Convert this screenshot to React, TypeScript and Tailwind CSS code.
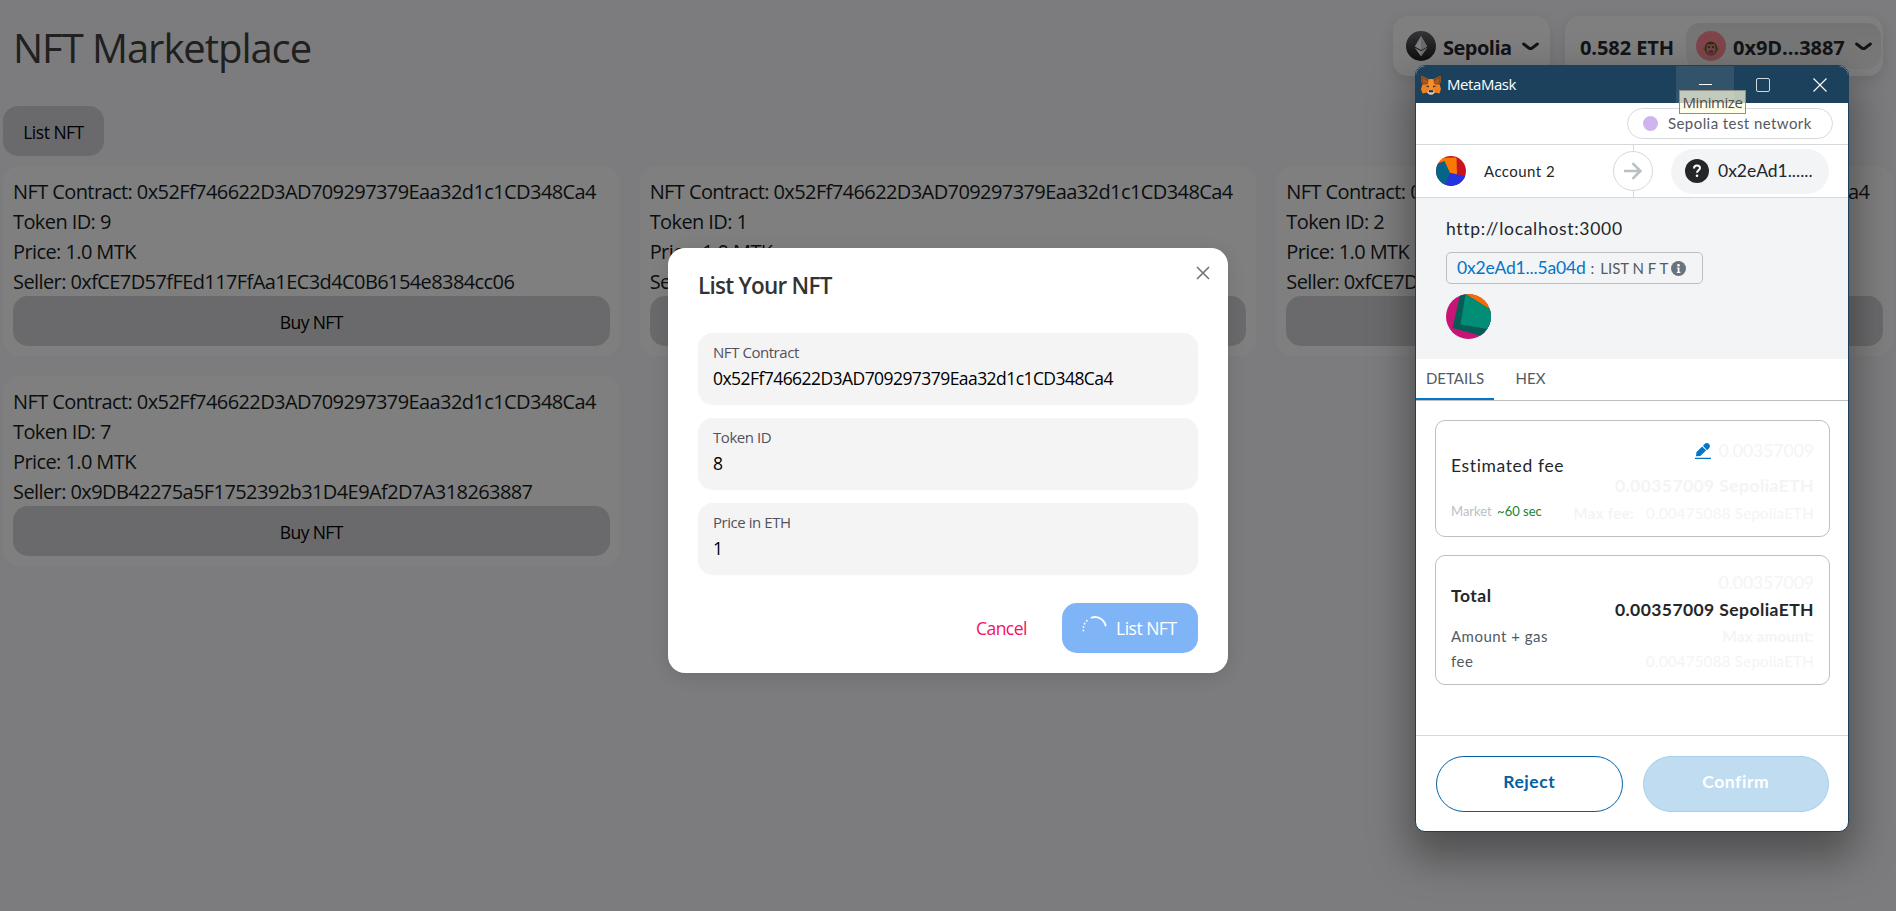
import type { ReactNode } from "react";

type Listing = { tokenId: number; seller: string };

const CONTRACT = "0x52Ff746622D3AD709297379Eaa32d1c1CD348Ca4";
const SELLER_A = "0xfCE7D57fFEd117FfAa1EC3d4C0B6154e8384cc06";
const SELLER_B = "0x9DB42275a5F1752392b31D4E9Af2D7A318263887";

const listings: Listing[] = [
  { tokenId: 9, seller: SELLER_A },
  { tokenId: 1, seller: SELLER_A },
  { tokenId: 2, seller: SELLER_A },
  { tokenId: 7, seller: SELLER_B },
];

function Chevron() {
  return (
    <svg viewBox="0 0 17 9" className="h-[9px] w-[17px] shrink-0" fill="none">
      <path d="M1.600 2 6.800 6Q8.500 7.200 10.200 6l5.200-4" stroke="#25292e" strokeWidth="2.900" strokeLinecap="round" />
    </svg>
  );
}

function EthIcon() {
  return (
    <svg viewBox="0 0 30 30" className="size-[30px] shrink-0">
      <defs>
        <linearGradient id="eth" x1="0" y1="0" x2="0" y2="1">
          <stop offset="0" stopColor="#6b6b70" />
          <stop offset="1" stopColor="#1c1c20" />
        </linearGradient>
      </defs>
      <circle cx="15" cy="15" r="15" fill="url(#eth)" />
      <path d="M15 5 8.800 15.400 15 19l6.200-3.600z" fill="#fff" />
      <path d="M15 5v14l6.200-3.600z" fill="#d6d6d9" />
      <path d="m8.800 16.700 6.200 8.500 6.200-8.500-6.200 3.600z" fill="#fff" />
      <path d="M15 20.300v4.900l6.200-8.500z" fill="#d6d6d9" />
    </svg>
  );
}

function MonkeyAvatar() {
  return (
    <svg viewBox="0 0 30 30" className="size-[30px] shrink-0">
      <circle cx="15" cy="15" r="15" fill="#ff8a94" />
      <circle cx="8.800" cy="18" r="1.900" fill="#c08a74" />
      <circle cx="21.200" cy="18" r="1.900" fill="#c08a74" />
      <ellipse cx="15" cy="17.500" rx="6.300" ry="7" fill="#7a4a34" />
      <path d="M15 13.800c1.500-1.600 4.300-.8 4.300 1.500 0 1 .4 1.900.4 3.300 0 3-2 5-4.700 5s-4.700-2-4.700-5c0-1.400.4-2.300.4-3.300 0-2.300 2.800-3.100 4.300-1.500z" fill="#c99479" />
      <circle cx="13" cy="16" r=".9" fill="#3a2018" />
      <circle cx="17" cy="16" r=".9" fill="#3a2018" />
      <ellipse cx="15" cy="20.800" rx="2.600" ry="1.600" fill="#b8307e" />
    </svg>
  );
}

function FoxIcon() {
  return (
    <svg viewBox="0 0 20 20" className="size-5 shrink-0">
      <path d="M.8.8 7.800 4.300h4.400L19.200.8 20 4.500l-1.300 5.300L20 14l-1.500 4.600-4.500-1.100-2.500 1.900h-3L6 17.500l-4.500 1.100L0 14l1.300-4.200L0 4.500z" fill="#f0811f" />
      <path d="m.8.8 7 3.500-1.500 5L1.300 9.800 0 4.500z" fill="#8a4a1c" />
      <path d="m19.200.8-7 3.500 1.500 5 5 .5L20 4.500z" fill="#8a4a1c" />
      <path d="M2 3.300 6.500 6l-.8 2.800L2 8.300z" fill="#a85a20" />
      <path d="M18 3.300 13.500 6l.8 2.800 3.700-.5z" fill="#a85a20" />
      <path d="M7.800 4.300h4.400l.3 9.700-2.500 1-2.500-1z" fill="#f7902c" />
      <path d="m4.500 11 3.300-.3.300 1.800zM15.500 11l-3.300-.3-.3 1.800z" fill="#33272a" />
      <path d="m6 17.500 1.800-2.500h4.400l1.800 2.500-2.500 1.900h-3z" fill="#d5cdc8" />
      <path d="M8 15.300h4l.4 2H7.600z" fill="#2a2226" />
    </svg>
  );
}

function Header() {
  return (
    <header className="flex h-[91px] items-start justify-between pl-[13px] pr-[13px] pt-4">
      <h1 className="pt-[2px] font-['Open_Sans',sans-serif] text-[40px] leading-[60px] tracking-[-1.05px] text-[#404040]">
        NFT Marketplace
      </h1>
      <div className="flex gap-[15px] font-bold text-[#25292e]">
        <div className="flex h-[60px] w-[157px] items-center gap-[7px] rounded-[15px] bg-white pl-[13px] text-[20px] shadow-[0_5px_15px_rgba(0,0,0,0.12)]">
          <EthIcon />
          <span className="pt-[4px] tracking-[-0.5px]">Sepolia</span>
          <span className="pl-[3px]">
            <Chevron />
          </span>
        </div>
        <div className="flex h-[60px] w-[318px] items-center justify-between rounded-[15px] bg-white pl-[15px] pr-[2px] text-[20px] shadow-[0_5px_15px_rgba(0,0,0,0.12)]">
          <span className="pt-[4px] tracking-[-0.08px]">0.582 ETH</span>
          <div className="flex h-[46px] w-[195px] items-center gap-[7px] rounded-[14px] bg-linear-to-b from-[#e8e8e8] to-[#f4f4f4] pl-[10px]">
            <MonkeyAvatar />
            <span className="pt-[4px] tracking-[-0.03px]">0x9D...3887</span>
            <span className="pl-[3px]">
              <Chevron />
            </span>
          </div>
        </div>
      </div>
    </header>
  );
}

function ListingCard({ tokenId, seller }: Listing) {
  return (
    <article className="flex h-[190px] flex-col justify-between rounded-[17px] bg-white p-[10px] pt-[11px] text-[20px] leading-[30px] tracking-[-0.59px] text-[#171c21]">
      <div className="h-[119px]">
        <p className="whitespace-nowrap">NFT Contract: {CONTRACT}</p>
        <p>Token ID: {tokenId}</p>
        <p>Price: 1.0 MTK</p>
        <p className="whitespace-nowrap">Seller: {seller}</p>
      </div>
      <button className="flex h-[50px] w-full items-center justify-center rounded-[15px] bg-[#d4d4d8] pt-[2px] text-[17.5px] text-black">
        Buy NFT
      </button>
    </article>
  );
}

function Field({ label, value }: { label: string; value: string }) {
  return (
    <label className="flex h-[71px] flex-col rounded-[15px] bg-[#f4f4f5] px-[15px] pt-[8px] shadow-[0_1px_2px_rgba(0,0,0,0.05)]">
      <span className="text-[15px] leading-[22px] tracking-[-0.45px] text-[#52525b]">{label}</span>
      <span className="pt-[2px] text-[17.5px] leading-[26px] tracking-[-0.56px] text-black">{value}</span>
    </label>
  );
}

function ListModal() {
  return (
    <section className="relative flex h-[425px] w-[560px] flex-col rounded-[17px] bg-white px-[30px] pt-[21px] shadow-[0_4px_18px_rgba(0,0,0,0.12)]">
      <button className="absolute right-[18px] top-[18px]" aria-label="Close">
        <svg viewBox="0 0 14 14" className="size-[14px]" fill="none" stroke="#71717a" strokeWidth="1.600">
          <path d="m1 1 12 12M13 1 1 13" />
        </svg>
      </button>
      <h2 className="text-[22.5px] font-semibold leading-[34px] tracking-[-0.75px] text-[#333]">List Your NFT</h2>
      <div className="flex flex-col gap-[14px] pt-[30px]">
        <Field label="NFT Contract" value={CONTRACT} />
        <Field label="Token ID" value="8" />
        <Field label="Price in ETH" value="1" />
      </div>
      <div className="flex items-center justify-end gap-[35px] pt-[29px] text-[17.5px] tracking-[-0.5px]">
        <button className="pt-[1px] text-[#f31260]">Cancel</button>
        <button className="flex h-[50px] w-[136px] items-center rounded-[15px] bg-[#7fb5f6] pl-[20px] text-white">
          <svg viewBox="0 0 25 25" className="size-[25px]" fill="none" stroke="#fff" strokeLinecap="round">
            <path d="M9.600 1.600A11 11 0 0 1 23.600 9.500" strokeWidth="1.900" />
            <path d="M1.400 14.500A11 11 0 0 1 7.500 3" strokeWidth="1.900" strokeDasharray="0.100 3.400" opacity=".85" />
          </svg>
          <span className="pl-[9px] pt-[1px]">List NFT</span>
        </button>
      </div>
    </section>
  );
}

function AccountIcon() {
  return (
    <svg viewBox="0 0 30 30" className="size-[30px] shrink-0">
      <clipPath id="acc">
        <circle cx="15" cy="15" r="15" />
      </clipPath>
      <g clipPath="url(#acc)">
        <path d="M0 0h30v30H0z" fill="#c8141f" />
        <path d="m5 2 15.500-.5.500 17L14 17 8 5z" fill="#fa7900" />
        <path d="M2 8 8.500 5l5.500 12-5 13H0V6z" fill="#03658c" />
        <path d="m0 8 8.500-3L11 2H3z" fill="#fa7900" />
        <path d="m14 17 16 3v10H9z" fill="#2334e1" />
      </g>
    </svg>
  );
}

function ContractIcon() {
  return (
    <svg viewBox="0 0 45 45" className="size-[45px]">
      <clipPath id="ctr">
        <circle cx="22.500" cy="22.500" r="22.500" />
      </clipPath>
      <g clipPath="url(#ctr)">
        <path d="M0 0h45v45H0z" fill="#c81476" />
        <path d="M15 0h30v20L19 0z" fill="#f56c00" />
        <path d="M14.500-1 19.500 0 45 16v28l-11-2.500L6.500 34z" fill="#045e56" />
        <path d="M19.500 0 45 16v19.500L14.500 30.500z" fill="#018e77" />
      </g>
    </svg>
  );
}

function TitleBar() {
  return (
    <div className="flex h-[37px] shrink-0 items-center bg-[#1c415c] pl-[5px] text-white">
      <FoxIcon />
      <span className="flex-1 pl-[6px] font-['Open_Sans',sans-serif] text-[15px] tracking-[-0.43px]">MetaMask</span>
      <span className="relative flex h-full w-[58px] items-center justify-center bg-[#33536b]">
        <span className="h-px w-[13px] bg-white" />
        <span className="absolute left-[3px] top-[24px] z-10 flex h-[24px] w-[67px] items-center justify-center border border-[#8f8f88] bg-[#ffffe1]/70 font-['Open_Sans',sans-serif] text-[15px] tracking-[-0.43px] text-[#4d4d4d]">
          Minimize
        </span>
      </span>
      <span className="flex w-[57px] justify-center">
        <span className="size-[14px] rounded-[2px] border border-white/80" />
      </span>
      <span className="flex w-[57px] justify-center">
        <svg viewBox="0 0 14 14" className="size-[14px]" fill="none" stroke="#fff" strokeWidth="1.100">
          <path d="m.5.5 13 13M13.500.5l-13 13" />
        </svg>
      </span>
    </div>
  );
}

function Panel({ className, children }: { className: string; children: ReactNode }) {
  return (
    <div className={`flex justify-between rounded-[10px] border border-[#bbc0c5] px-[15px] ${className}`}>{children}</div>
  );
}

function WalletWindow() {
  return (
    <section className="flex h-[767px] w-[434px] flex-col overflow-hidden rounded-[10px] border border-[#1c415c] bg-white font-['Lato',sans-serif] text-[#24272a] shadow-[0_20px_40px_6px_rgba(0,0,0,0.36)]">
      <TitleBar />

      <div className="flex h-[42px] shrink-0 items-center justify-end border-b border-[#d6d9dc] pr-[15px]">
        <div className="flex h-[31px] w-[206px] items-center rounded-full border border-[#d6d9dc] pl-[15px] text-[15px] tracking-[0.43px] text-[#535a61]">
          <span className="size-[15px] rounded-full bg-[#cfb5f0]" />
          <span className="pl-[10px]">Sepolia test network</span>
        </div>
      </div>

      <div className="flex h-[53px] shrink-0 items-center border-b border-[#d6d9dc] pl-[20px]">
        <AccountIcon />
        <span className="w-[147px] pl-[18px] text-[15px] tracking-[0.44px]">Account 2</span>
        <div className="flex flex-col items-center">
          <span className="h-[6px] w-px bg-[#d6d9dc]" />
          <span className="flex size-[40px] items-center justify-center rounded-full border border-[#d6d9dc]">
            <svg viewBox="0 0 18 18" className="size-[18px]" fill="none" stroke="#bbc0c5" strokeWidth="2.600">
              <path d="M0 9h16M8.500 1.200 16.300 9l-7.800 7.800" />
            </svg>
          </span>
          <span className="h-[6px] w-px bg-[#d6d9dc]" />
        </div>
        <div className="ml-[18px] flex h-[45px] w-[158px] items-center rounded-full bg-[#f2f4f6] pl-[14px]">
          <svg viewBox="0 0 24 24" className="size-[24px]" fill="none">
            <circle cx="12" cy="12" r="12" fill="#24272a" />
            <path d="M9 9.400c0-1.800 1.300-3 3-3s3 1.100 3 2.700c0 2.100-3 2.200-3 4.600" stroke="#fff" strokeWidth="2" />
            <circle cx="12" cy="16.800" r="1.300" fill="#fff" />
          </svg>
          <span className="pl-[9px] text-[17.5px]">0x2eAd1......</span>
        </div>
      </div>

      <div className="flex h-[161px] shrink-0 flex-col items-start bg-[#f2f4f6] pl-[30px] pt-[19px]">
        <span className="text-[17.5px] leading-[24px] tracking-[0.7px]">http://localhost:3000</span>
        <div className="mt-[11px] flex h-[32px] w-[257px] items-center rounded-[5px] border border-[#bbc0c5] pl-[10px] text-[15px] text-[#535a61]">
          <span className="text-[17.5px] tracking-[-0.17px] text-[#0376c9]">0x2eAd1...5a04d</span>
          <span className="pl-[5px]">:</span>
          <span className="w-[74px] whitespace-nowrap pl-[6px]">LIST N F T</span>
          <svg viewBox="0 0 16 16" className="ml-[3px] size-[15px] shrink-0">
            <circle cx="8" cy="8" r="8" fill="#6a737d" />
            <path d="M6.300 6.800h2.700v4.700h1v1.200H6.200v-1.200h1V8h-.9z" fill="#fff" />
            <circle cx="8" cy="4.500" r="1.400" fill="#fff" />
          </svg>
        </div>
        <div className="pt-[10px]">
          <ContractIcon />
        </div>
      </div>

      <div className="flex h-[42px] shrink-0 border-b border-[#bbc0c5] text-[15px] text-[#535a61]">
        <span className="flex w-[78px] items-center justify-center border-b-2 border-[#0376c9]">DETAILS</span>
        <span className="flex w-[73px] items-center justify-center border-b-2 border-transparent">HEX</span>
      </div>

      <div className="flex flex-1 flex-col gap-[18px] pl-[19px] pr-[18px] pt-[19px]">
        <Panel className="h-[117px]">
          <div className="flex flex-col pt-[32px]">
            <span className="text-[17.5px] leading-[26px] tracking-[0.62px]">Estimated fee</span>
            <span className="pt-[23px] text-[13px] leading-[18px] text-[#bbc0c5]">
              Market <span className="pl-[2px] text-[#1c8234]">~60 sec</span>
            </span>
          </div>
          <div className="flex flex-col items-end text-[#f4f4f5]">
            <div className="flex items-center gap-2 pt-[17px] text-[17.5px] leading-[26px]">
              <svg viewBox="0 0 16 16" className="size-4" fill="#0376c9">
                <path d="M0 14.700h16V16H0zM1 13.300l.5-4.200L7.200 3.500l3.900 3.900L5.300 13zM8 2.700 9.600 1C10.900-.4 12.800-.2 14 .9s1.300 3 0 4.300L12 7.200z" />
              </svg>
              <span>0.00357009</span>
            </div>
            <span className="pt-[9px] text-[17.5px] font-bold leading-[26px] tracking-[0.42px]">0.00357009 SepoliaETH</span>
            <span className="pt-[3px] text-[15px] leading-[22px] tracking-[0.28px]">
              <b className="pr-2">Max fee:</b> 0.00475088 SepoliaETH
            </span>
          </div>
        </Panel>

        <Panel className="h-[130px]">
          <div className="flex w-[110px] flex-col pt-[27px]">
            <span className="text-[17.5px] font-bold leading-[26px] tracking-[0.5px]">Total</span>
            <span className="pt-[15px] text-[15px] leading-[25px] tracking-[0.49px] text-[#535a61]">Amount + gas fee</span>
          </div>
          <div className="flex flex-col items-end pt-[14px] text-[#f4f4f5]">
            <span className="text-[17.5px] leading-[26px]">0.00357009</span>
            <span className="text-[17.5px] font-bold leading-[28px] tracking-[0.42px] text-[#24272a]">0.00357009 SepoliaETH</span>
            <b className="text-[15px] leading-[25px] tracking-[0.3px]">Max amount:</b>
            <span className="text-[15px] leading-[25px] tracking-[0.28px]">0.00475088 SepoliaETH</span>
          </div>
        </Panel>
      </div>

      <div className="flex h-[96px] shrink-0 gap-[20px] border-t border-[#d6d9dc] pl-[20px] pr-[19px] pt-[20px] text-[17.5px] font-bold tracking-[0.56px]">
        <button className="h-[56px] flex-1 rounded-full border border-[#0260a4] pb-[3px] text-[#0260a4]">Reject</button>
        <button className="h-[56px] flex-1 rounded-full border border-[#a6cfec] bg-[#c0dcf1] pb-[3px] text-white">Confirm</button>
      </div>
    </section>
  );
}

export default function App() {
  return (
    <div className="relative h-[911px] overflow-hidden bg-[#f8f8fc] font-['Open_Sans',sans-serif]">
      <Header />
      <main className="flex flex-col items-start gap-[10px] px-[3px] pt-[15px]">
        <button className="flex h-[50px] w-[101px] items-center justify-center rounded-[15px] bg-[#d4d4d8] pt-[2px] text-[17.5px] tracking-[-0.5px] text-black">
          List NFT
        </button>
        <div className="grid w-full grid-cols-3 gap-5">
          {listings.map((item) => (
            <ListingCard key={item.tokenId} {...item} />
          ))}
        </div>
      </main>

      <div className="absolute inset-0 flex items-start justify-center bg-black/50 pt-[248px]">
        <ListModal />
      </div>
      <div className="absolute left-[1415px] top-[65px]">
        <WalletWindow />
      </div>
    </div>
  );
}
